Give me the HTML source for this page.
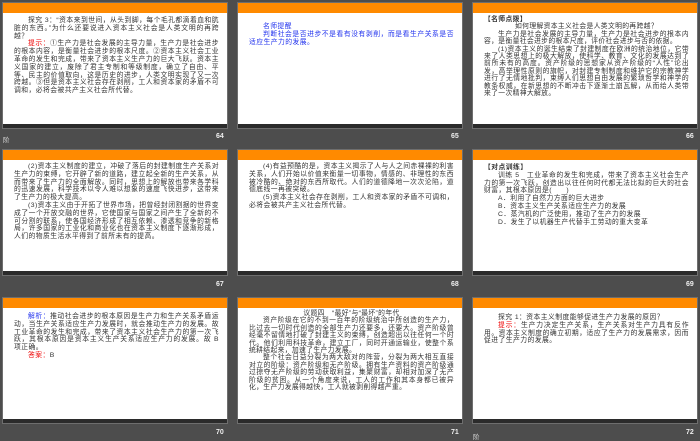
<!DOCTYPE html>
<html><head><meta charset="utf-8"><style>
*{margin:0;padding:0;box-sizing:border-box}
body{width:700px;height:438px;background:#4d4d4d;position:relative;overflow:hidden;font-family:"Liberation Sans","Noto Sans CJK SC",sans-serif}
.s{position:absolute;width:226px;height:127px;background:#fff;border:1px solid #6e6e6e;overflow:hidden}
.s .o{position:absolute;left:0;top:0;right:0;height:10px;background:#ff8a00}
.s .d{position:absolute;left:0;bottom:0;right:0;height:4px;background:#2b2b2b}
.t{position:absolute;left:11px;right:8px;top:13px;font-size:6.8px;line-height:7.8px;letter-spacing:0.45px;color:#333;text-align:justify;word-break:break-all}
.t p{text-indent:14px}
.r{color:#e00}.b{color:#2233ee}
.n{position:absolute;color:#eee;font-size:7px;font-weight:bold}
.l{position:absolute;color:#ddd;font-size:6.5px}
</style></head><body>

<div class="s" style="left:2px;top:2px"><div class="o"></div>
<div class="t" style="top:14px"><p>探究 3：“资本来到世间，从头到脚，每个毛孔都滴着血和肮脏的东西。”为什么还要说进入资本主义社会是人类文明的再跨越？</p>
<p><span class="r">提示：</span>①生产力是社会发展的主导力量，生产力是社会进步的根本内容，是衡量社会进步的根本尺度。②资本主义社会工业革命的发生和完成，带来了资本主义生产力的巨大飞跃。资本主义国家的建立，废除了君主专制和等级制度，确立了自由、平等、民主的价值取向，这是历史的进步，人类文明实现了又一次跨越。③但是资本主义社会存在剥削，工人和资本家的矛盾不可调和，必将会被共产主义社会所代替。</p></div><div class="d"></div></div>
<div class="l" style="left:3px;top:134px">阶</div><div class="n" style="left:216px;top:133px">64</div>

<div class="s" style="left:237px;top:2px"><div class="o"></div>
<div class="t b" style="top:20px"><p>名师提醒</p><p>判断社会是否进步不是看有没有剥削，而是看生产关系是否适应生产力的发展。</p></div><div class="d"></div></div>
<div class="n" style="left:451px;top:133px">65</div>

<div class="s" style="left:472px;top:2px"><div class="o"></div>
<div class="t" style="top:13px;line-height:7.4px;letter-spacing:0.35px"><div style="font-weight:bold">【名师点拨】</div>
<div style="text-align:center">如何理解资本主义社会是人类文明的再跨越？</div>
<p>生产力是社会发展的主导力量，生产力是社会进步的根本内容，是衡量社会进步的根本尺度，评价社会进步与否的依据。</p>
<p>(1)资本主义的诞生结束了封建制度在欧洲的统治地位，它带来了人类思想上的极大解放，使科学、教育、文化的发展达到了前所未有的高度。资产阶级的思想家从资产阶级的“人性”论出发，高举理性原则的旗帜，对封建专制制度和维护它的宗教神学进行了无情地批判，束缚人们思想自由发展的繁琐哲学和神学的教条权威，在新思想的不断冲击下逐渐土崩瓦解，从而给人类带来了一次精神大解放。</p></div><div class="d"></div></div>
<div class="n" style="left:686px;top:133px">66</div>

<div class="s" style="left:2px;top:149px"><div class="o"></div>
<div class="t"><p>(2)资本主义制度的建立，冲破了落后的封建制度生产关系对生产力的束缚，它开辟了新的道路，建立起全新的生产关系，从而带来了生产力的全面解放。同时，思想上的解放也带来各学科的迅速发展，科学技术以令人难以想象的速度飞快进步，这带来了生产力的极大提高。</p>
<p>(3)资本主义由于开拓了世界市场，把曾经封闭割据的世界变成了一个开放交融的世界，它使国家与国家之间产生了全新的不可分割的联系，使各国经济形成了相互依赖、渗透和竞争的新格局，许多国家的工业化和商业化也在资本主义制度下逐渐形成，人们的物质生活水平得到了前所未有的提高。</p></div><div class="d"></div></div>
<div class="n" style="left:216px;top:281px">67</div>

<div class="s" style="left:237px;top:149px"><div class="o"></div>
<div class="t"><p>(4)有益预酷的是，资本主义揭示了人与人之间赤裸裸的利害关系，人们开始以价值来衡量一切事物，情感的、非理性的东西被冷酷的、绝对的东西所取代。人们的道德降地一次次沦陷，道德底线一再被突破。</p>
<p>(5)资本主义社会存在剥削，工人和资本家的矛盾不可调和，必将会被共产主义社会所代替。</p></div><div class="d"></div></div>
<div class="n" style="left:451px;top:281px">68</div>

<div class="s" style="left:472px;top:149px"><div class="o"></div>
<div class="t" style="top:14px"><div style="font-weight:bold">【对点训练】</div>
<p>训练 5　工业革命的发生和完成，带来了资本主义社会生产力的第一次飞跃，创造出以往任何时代都无法比拟的巨大的社会财富，其根本原因是(　　)</p>
<p>A．利用了自然力方面的巨大进步</p><p>B．资本主义生产关系适应生产力的发展</p><p>C．蒸汽机的广泛使用，推动了生产力的发展</p><p>D．发生了以机器生产代替手工劳动的重大变革</p></div><div class="d"></div></div>
<div class="n" style="left:686px;top:281px">69</div>

<div class="s" style="left:2px;top:297px"><div class="o"></div>
<div class="t" style="top:15px"><p><span class="b">解析：</span>推动社会进步的根本原因是生产力和生产关系矛盾运动，当生产关系适应生产力发展时，就会推动生产力的发展。故工业革命的发生和完成，带来了资本主义社会生产力的第一次飞跃，其根本原因是资本主义生产关系适应生产力的发展。故 B 项正确。</p><p><span class="r">答案：</span>B</p></div><div class="d"></div></div>
<div class="n" style="left:216px;top:429px">70</div>

<div class="s" style="left:237px;top:297px"><div class="o"></div>
<div class="t" style="top:12px;line-height:7.4px;letter-spacing:0.35px"><div style="text-align:center">议题四　“最好”与“最坏”的年代</div>
<p>资产阶级在它的不到一百年的阶级统治中所创造的生产力，比过去一切时代创造的全部生产力还要多，还要大。资产阶级曾经毫不留情地打破了封建主义的束缚，创造超出以往任何一个时代。他们利用科技革命，建立工厂，同时开通运输业，使整个系统耕结起来，加速了生产力发展。</p>
<p>整个社会日益分裂为两大敌对的阵营，分裂为两大相互直接对立的阶级：资产阶级和无产阶级。拥有生产资料的资产阶级通过掠夺无产阶级的劳动获取利益，集聚财富，却相对加深了无产阶级的贫困。从一个角度来说，工人的工作和其本身都已被异化，生产力发展得越快，工人就被剥削得越严重。</p></div><div class="d"></div></div>
<div class="n" style="left:451px;top:429px">71</div>

<div class="s" style="left:472px;top:297px"><div class="o"></div>
<div class="t" style="top:16px"><p>探究 1：资本主义制度能够促进生产力发展的原因？</p>
<p><span class="r">提示：</span>生产力决定生产关系，生产关系对生产力具有反作用。资本主义制度的确立初期，适应了生产力的发展需求，因而促进了生产力的发展。</p></div><div class="d"></div></div>
<div class="l" style="left:473px;top:431px">阶</div><div class="n" style="left:686px;top:429px">72</div>

</body></html>
